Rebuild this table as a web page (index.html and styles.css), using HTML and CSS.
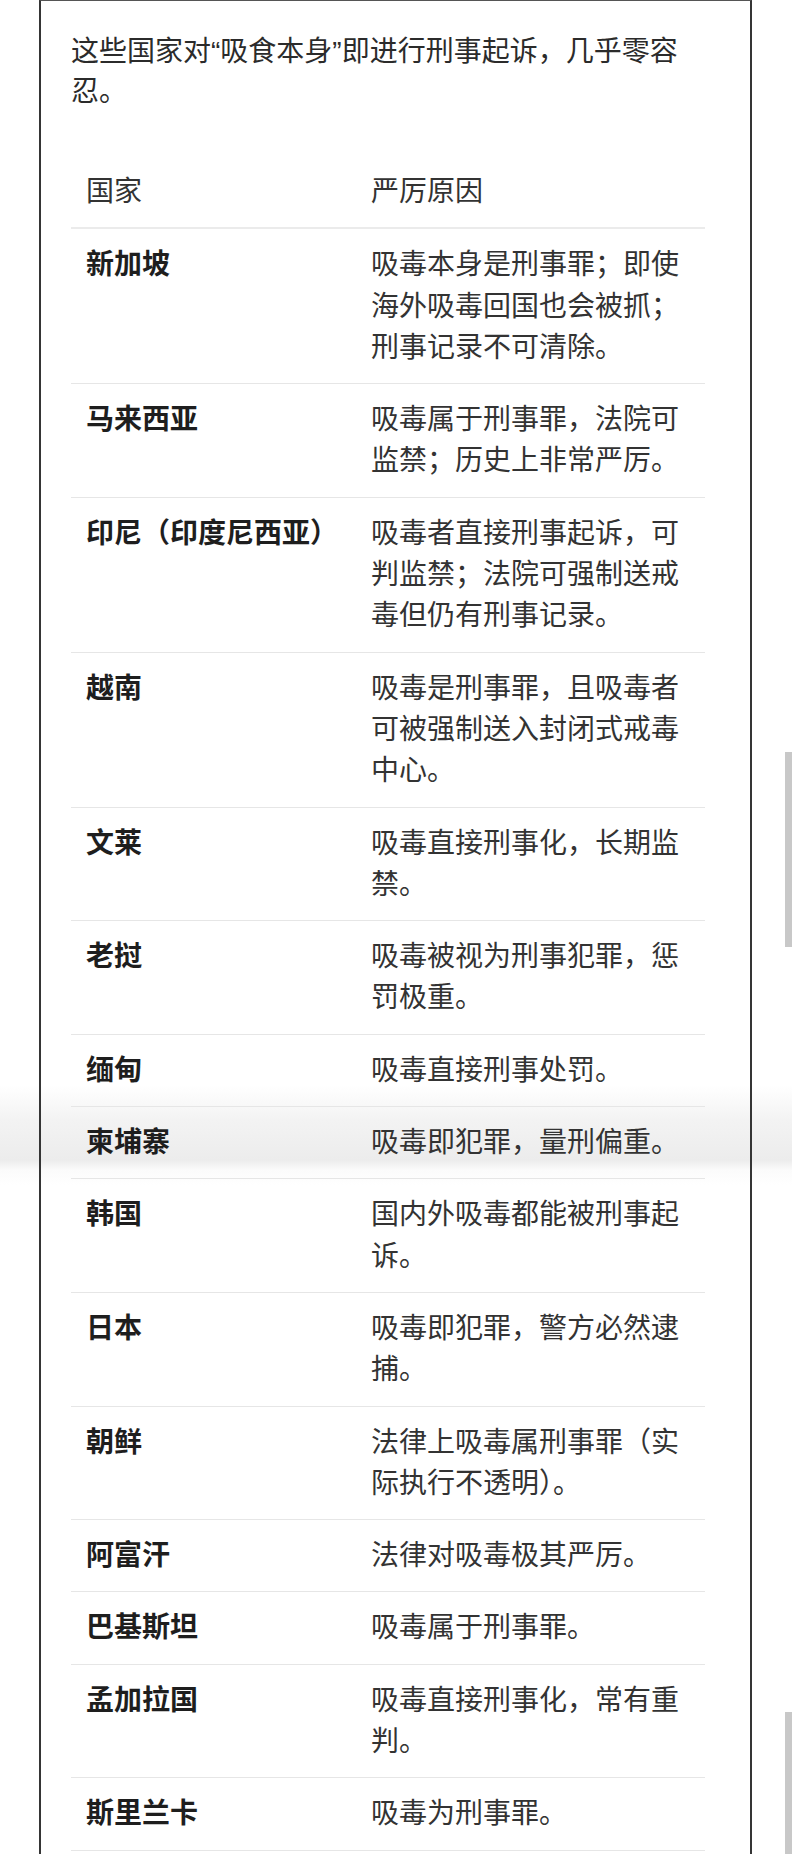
FILE: index.html
```html
<!DOCTYPE html>
<html lang="zh-CN">
<head>
<meta charset="utf-8">
<title>零容忍国家</title>
<link rel="stylesheet" href="styles.css">
</head>
<body>
<div class="frame">
  <p class="intro">这些国家对“吸食本身”即进行刑事起诉，几乎零容忍。</p>
  <table class="law">
    <colgroup><col class="c1"><col class="c2"></colgroup>
    <thead>
      <tr><th>国家</th><th>严厉原因</th></tr>
    </thead>
    <tbody>
      <tr><td class="name">新加坡</td><td>吸毒本身是刑事罪；即使海外吸毒回国也会被抓；刑事记录不可清除。</td></tr>
      <tr><td class="name">马来西亚</td><td>吸毒属于刑事罪，法院可监禁；历史上非常严厉。</td></tr>
      <tr><td class="name">印尼（印度尼西亚）</td><td>吸毒者直接刑事起诉，可判监禁；法院可强制送戒毒但仍有刑事记录。</td></tr>
      <tr><td class="name">越南</td><td>吸毒是刑事罪，且吸毒者可被强制送入封闭式戒毒中心。</td></tr>
      <tr><td class="name">文莱</td><td>吸毒直接刑事化，长期监禁。</td></tr>
      <tr><td class="name">老挝</td><td>吸毒被视为刑事犯罪，惩罚极重。</td></tr>
      <tr><td class="name">缅甸</td><td>吸毒直接刑事处罚。</td></tr>
      <tr><td class="name">柬埔寨</td><td>吸毒即犯罪，量刑偏重。</td></tr>
      <tr><td class="name">韩国</td><td>国内外吸毒都能被刑事起诉。</td></tr>
      <tr><td class="name">日本</td><td>吸毒即犯罪，警方必然逮捕。</td></tr>
      <tr><td class="name">朝鲜</td><td>法律上吸毒属刑事罪（实际执行不透明）。</td></tr>
      <tr><td class="name">阿富汗</td><td>法律对吸毒极其严厉。</td></tr>
      <tr><td class="name">巴基斯坦</td><td>吸毒属于刑事罪。</td></tr>
      <tr><td class="name">孟加拉国</td><td>吸毒直接刑事化，常有重判。</td></tr>
      <tr><td class="name">斯里兰卡</td><td>吸毒为刑事罪。</td></tr>
    </tbody>
  </table>
</div>
<div class="scroll scroll-a"></div>
<div class="scroll scroll-b"></div>
</body>
</html>
```
FILE: styles.css
```css
html, body {
  margin: 0;
  padding: 0;
}
body {
  width: 792px;
  height: 1854px;
  overflow: hidden;
  position: relative;
  font-family: "Liberation Sans", "Noto Sans CJK SC", sans-serif;
  color: #2a2a2a;
  background: linear-gradient(to bottom,
    #ffffff 0px, #ffffff 1085px,
    #f3f3f3 1120px, #ececec 1160px,
    #fbfbfb 1170px, #ffffff 1185px, #ffffff 1854px);
}
.frame {
  box-sizing: border-box;
  margin-left: 39px;
  width: 713px;
  height: 1854px;
  border-left: 2px solid #353535;
  border-right: 2px solid #353535;
  border-top: 1px solid #555;
  padding: 31px 0 0 30px;
}
.intro {
  margin: 0;
  width: 630px;
  font-size: 28px;
  line-height: 40px;
  color: #2b2b2b;
}
.law {
  margin-top: 44px;
  width: 634px;
  table-layout: fixed;
  border-collapse: collapse;
  font-size: 28px;
  line-height: 41.3px;
}
.c1 { width: 285px; }
.c2 { width: 349px; }
.law th,
.law td {
  text-align: left;
  vertical-align: top;
  padding: 15px 15px;
  border-bottom: 1px solid #e6e6e6;
}
.law th {
  font-weight: normal;
  color: #333;
  border-bottom: 2px solid #ebebeb;
}
.law th:first-child,
.law td.name {
  padding-right: 0;
}
.law td {
  color: #333;
}
.law td.name {
  font-weight: bold;
  color: #1e1e1e;
}
.scroll {
  position: absolute;
  right: 0;
  width: 7px;
  background: #c8c8c8;
}
.scroll-a {
  top: 752px;
  height: 195px;
}
.scroll-b {
  top: 1712px;
  height: 142px;
}
```
